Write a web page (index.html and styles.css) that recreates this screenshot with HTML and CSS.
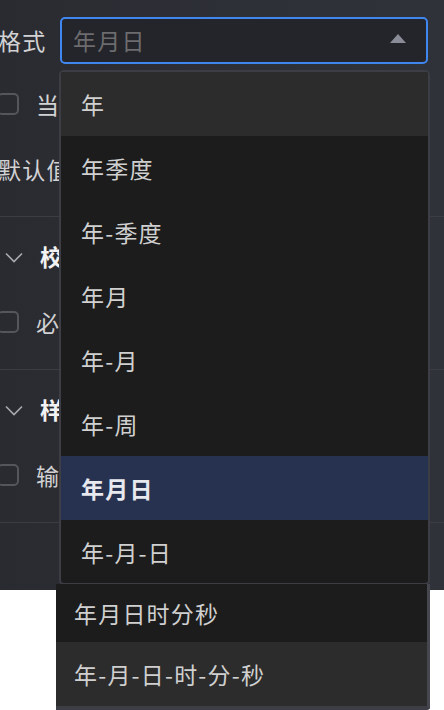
FILE: index.html
```html
<!DOCTYPE html>
<html lang="zh">
<head>
<meta charset="utf-8">
<link rel="stylesheet" href="styles.css">
</head>
<body>
<div class="page">
  <div class="panel">
    <div class="row row-format">
      <div class="label">格式</div>
      <div class="select">
        <span class="placeholder">年月日</span>
        <svg class="caret" width="16" height="9" viewBox="0 0 16 9"><path d="M0 9 L8 0 L16 9 Z" fill="#8a8c98"/></svg>
      </div>
    </div>
    <div class="row row-check">
      <span class="checkbox"></span>
      <span class="check-text">当前时间</span>
    </div>
    <div class="row row-default">
      <div class="label">默认值</div>
    </div>
    <div class="section">
      <div class="section-head">
        <svg class="chev" width="18" height="11" viewBox="0 0 18 11"><path d="M1 1.5 L9 9.5 L17 1.5" fill="none" stroke="#a9aab0" stroke-width="1.6"/></svg>
        <span class="section-title">校验</span>
      </div>
      <div class="row row-check2">
        <span class="checkbox"></span>
        <span class="check-text">必填</span>
      </div>
    </div>
    <div class="section">
      <div class="section-head">
        <svg class="chev" width="18" height="11" viewBox="0 0 18 11"><path d="M1 1.5 L9 9.5 L17 1.5" fill="none" stroke="#a9aab0" stroke-width="1.6"/></svg>
        <span class="section-title">样式</span>
      </div>
      <div class="row row-check2">
        <span class="checkbox"></span>
        <span class="check-text">输入框</span>
      </div>
    </div>
    <div class="section last"></div>
  </div>

  <ul class="menu">
    <li class="opt hover">年</li>
    <li class="opt">年季度</li>
    <li class="opt">年-季度</li>
    <li class="opt">年月</li>
    <li class="opt">年-月</li>
    <li class="opt">年-周</li>
    <li class="opt selected">年月日</li>
    <li class="opt">年-月-日</li>
  </ul>
  <ul class="menu-tail">
    <li class="opt2 first">年月日时分秒</li>
    <li class="opt2 hover">年-月-日-时-分-秒</li>
  </ul>
</div>
</body>
</html>
```

FILE: styles.css
```css
* { box-sizing: border-box; }
html, body { margin: 0; padding: 0; background: #ffffff; }
body {
  font-family: "Noto Sans CJK SC", "Noto Sans", sans-serif;
  font-size: 23px;
  letter-spacing: 1.2px;
  color: #d2d2d4;
}
.page { position: relative; width: 444px; height: 710px; overflow: hidden; }
.panel {
  width: 444px;
  height: 590px;
  background: linear-gradient(90deg, #2a2b30 0%, #2e3038 60%, #30323a 100%);
  display: flex;
  flex-direction: column;
}
.row { display: flex; align-items: center; }
.row-format { height: 80px; }
.label { width: 60px; flex: none; white-space: nowrap; line-height: 1; margin-left: -2px; }
.select {
  flex: none;
  width: 368px;
  height: 47px;
  margin-left: 2px;
  border: 2px solid #3f86ee;
  border-radius: 5px;
  background: #24252a;
  display: flex;
  align-items: center;
  padding-left: 11px;
  padding-right: 20px;
}
.placeholder { color: #6c6c6f; flex: 1; line-height: 1; }
.caret { flex: none; margin-top: -3px; }
.row-check { height: 48px; }
.row-check2 { height: 54px; }
.checkbox {
  width: 22px; height: 22px;
  margin-left: -3px;
  border: 2px solid #55565c;
  border-radius: 5px;
  flex: none;
}
.check-text { margin-left: 17px; line-height: 1; white-space: nowrap; }
.row-default { height: 88px; padding-bottom: 6px; }
.section { border-top: 1px solid #3c3d44; padding-bottom: 20px; }
.section.last { flex: 1; padding: 0; }
.section-head { height: 78px; display: flex; align-items: center; }
.chev { margin-left: 5px; flex: none; margin-top: 2px; }
.section-title { margin-left: 17px; font-weight: 700; color: #f2f2f3; line-height: 1; }

.menu {
  position: absolute;
  left: 59px;
  top: 70px;
  width: 371px;
  height: 515px;
  margin: 0; padding: 0;
  list-style: none;
  border: 2px solid #3d3e45;
  border-radius: 5px;
  background: #1c1c1c;
  overflow: hidden;
}
.opt {
  height: 64px;
  display: flex;
  align-items: center;
  padding-left: 20px;
  line-height: 1;
  color: #d0d0d0;
}
.opt.hover { background: #2c2c2c; }
.opt.selected { background: #273250; color: #e8e9ee; font-weight: 700; }

.menu-tail {
  position: absolute;
  left: 56px;
  top: 584px;
  width: 374px;
  height: 126px;
  margin: 0; padding: 0;
  list-style: none;
  background: #1c1c1c;
  border-right: 3px solid #45464e;
  border-bottom: 4px solid #3d3e45;
  border-bottom-right-radius: 3px;
}
.opt2 {
  display: flex;
  align-items: center;
  padding-left: 18px;
  line-height: 1;
  color: #d0d0d0;
}
.opt2.first { height: 58px; }
.opt2.hover { height: 64px; background: #2c2c2c; }
```
